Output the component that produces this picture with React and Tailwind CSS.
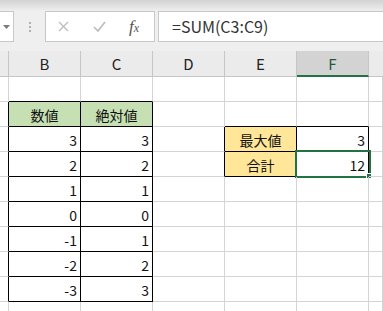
import React from 'react';

const COLS = ['', 'B', 'C', 'D', 'E', 'F', ''];
const WIDTHS = ['w-[9px]', 'w-[72px]', 'w-[72px]', 'w-[72px]', 'w-[72px]', 'w-[72px]', 'w-[14px]'];

// cell contents per grid row (row 0 = first visible row under the headers)
const cells = {
  '1-1': { text: '数値', fill: 'bg-[#c6e0b4]', center: true },
  '1-2': { text: '絶対値', fill: 'bg-[#c6e0b4]', center: true },
  '2-1': { text: '3' }, '2-2': { text: '3' },
  '3-1': { text: '2' }, '3-2': { text: '2' },
  '4-1': { text: '1' }, '4-2': { text: '1' },
  '5-1': { text: '0' }, '5-2': { text: '0' },
  '6-1': { text: '-1' }, '6-2': { text: '1' },
  '7-1': { text: '-2' }, '7-2': { text: '2' },
  '8-1': { text: '-3' }, '8-2': { text: '3' },
  '2-4': { text: '最大値', fill: 'bg-[#ffe699]', center: true },
  '2-5': { text: '3' },
  '3-4': { text: '合計', fill: 'bg-[#ffe699]', center: true },
  '3-5': { text: '12', selected: true },
};

const inTable = (r, c) =>
  ((c === 1 || c === 2) && r >= 1 && r <= 8) || ((c === 4 || c === 5) && r >= 2 && r <= 3);

function Cell({ r, c }) {
  const cell = cells[`${r}-${c}`];
  const right = inTable(r, c) || inTable(r, c + 1) ? 'border-r-black' : 'border-r-[#d4d4d4]';
  const bottom = inTable(r, c) || inTable(r + 1, c) ? 'border-b-black' : 'border-b-[#d4d4d4]';
  return (
    <div
      className={`relative h-[25px] shrink-0 border-r border-b ${right} ${bottom} ${WIDTHS[c]} ${
        cell?.fill || ''
      } flex items-center pt-[1px] ${cell?.center ? 'justify-center' : 'justify-end pr-[3px]'}`}
    >
      {cell && <span className="text-[14px] leading-none text-[#111]">{cell.text}</span>}
      {cell?.selected && (
        <div className="absolute -left-[2px] -top-[2px] -right-[3px] -bottom-[2px] border-2 border-[#217346]">
          <div className="absolute -right-[3px] -bottom-[3px] w-[6px] h-[6px] bg-[#217346] border border-white" />
        </div>
      )}
    </div>
  );
}

export default function App() {
  return (
    <div className="w-[383px] h-[311px] overflow-hidden bg-white font-['Noto_Sans_CJK_JP','Liberation_Sans',sans-serif]">
      {/* ribbon edge */}
      <div className="h-[11px] bg-gradient-to-b from-[#d2d2d2] to-[#efefef]" />

      {/* formula bar */}
      <div className="h-[40px] bg-[#efefef] flex items-start">
        <div className="w-[14px] h-[31px] bg-white border-y border-r border-[#c8c8c8] flex items-center justify-center">
          <svg width="7" height="4" viewBox="0 0 7 4">
            <path d="M0 0h7L3.5 4z" fill="#7a7a7a" />
          </svg>
        </div>
        <div className="w-[31px] h-[31px] flex flex-col items-center justify-center gap-[2px]">
          <span className="w-[2px] h-[2px] bg-[#b0b0b0]" />
          <span className="w-[2px] h-[2px] bg-[#b0b0b0]" />
          <span className="w-[2px] h-[2px] bg-[#b0b0b0]" />
        </div>
        <div className="w-[110px] h-[31px] bg-white border border-[#c8c8c8] flex items-center">
          <svg className="ml-[12px]" width="11" height="11" viewBox="0 0 11 11">
            <path d="M1 1l9 9M10 1l-9 9" stroke="#bdbdbd" strokeWidth="1.3" />
          </svg>
          <svg className="ml-[24px]" width="13" height="11" viewBox="0 0 13 11">
            <path d="M1 6l4 4L12 1" stroke="#bdbdbd" strokeWidth="1.7" fill="none" />
          </svg>
          <span className="ml-[23px] font-['Liberation_Serif',serif] italic text-[17px] leading-none text-[#555]">
            f<span className="text-[12px]">x</span>
          </span>
        </div>
        <div className="ml-[3px] flex-1 h-[31px] bg-white border-y border-l border-[#c8c8c8] flex items-center pl-[13px] pb-[1px]">
          <span className="text-[16px] leading-none text-[#333]">=SUM(C3:C9)</span>
        </div>
      </div>

      {/* column headers */}
      <div className="flex h-[26px] bg-[#ebebeb]">
        {COLS.map((h, i) => (
          <div
            key={i}
            className={`shrink-0 h-full flex items-center justify-center text-[15px] leading-none ${WIDTHS[i]} ${
              i < 6 ? 'border-r border-[#c6c6c6]' : ''
            } ${
              h === 'F'
                ? 'bg-[#d3d3d3] text-[#1d5b3a] border-b-2 border-b-[#217346]'
                : 'text-[#222] border-b border-b-[#c6c6c6]'
            }`}
          >
            {h}
          </div>
        ))}
      </div>

      {/* grid */}
      {Array.from({ length: 10 }, (_, r) => (
        <div key={r} className="flex">
          {COLS.map((_, c) => (
            <Cell key={c} r={r} c={c} />
          ))}
        </div>
      ))}
    </div>
  );
}
